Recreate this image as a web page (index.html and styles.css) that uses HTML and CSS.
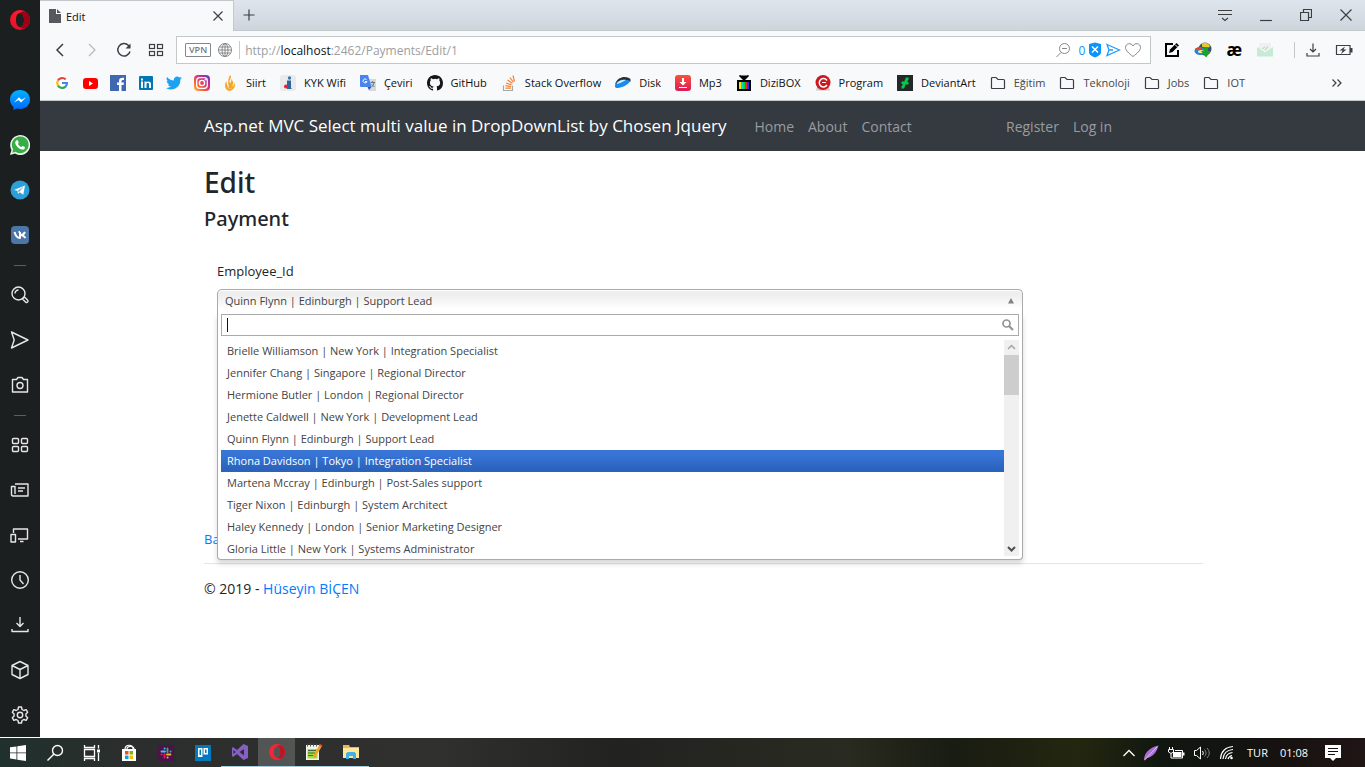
FILE: index.html
```html
<!DOCTYPE html>
<html lang="en">
<head>
<meta charset="utf-8">
<title>Edit</title>
<link rel="stylesheet" href="styles.css">
</head>
<body>
<div class="desktop">
  <div class="browser">
    <aside class="sidebar" aria-label="Browser sidebar">
      <button class="side-btn side-logo" aria-label="Opera menu"><svg width="20" height="20" viewBox="0 0 20 20"><defs><linearGradient id="opl" x1="0" y1="0" x2="0" y2="1"><stop offset="0" stop-color="#ff1b2d"/><stop offset="1" stop-color="#e6102a"/></linearGradient></defs><path fill="url(#opl)" fill-rule="evenodd" d="M10 0a10 10 0 1 0 0 20a10 10 0 0 0 0-20zM10 3c2.600 0 4 3 4 7s-1.400 7-4 7s-4-3-4-7s1.400-7 4-7z"/><path fill="#9c0014" d="M10 3c2-2 4.500-2 6.700-.400a10 10 0 0 1 0 14.800c-2.200 1.600-4.700 1.600-6.700-.400c2.600 0 4-3 4-7s-1.400-7-4-7z"/></svg></button>
      <button class="side-btn" aria-label="Messenger"><svg width="20" height="20" viewBox="0 0 20 20"><defs><linearGradient id="ms" x1="0" y1="0" x2="0" y2="1"><stop offset="0" stop-color="#00b2ff"/><stop offset="1" stop-color="#0068ff"/></linearGradient></defs><path fill="url(#ms)" d="M10 0c5.800 0 10 4.200 10 9.600S15.800 19 10 19c-1.200 0-2-.100-3-.400L3.500 20v-3C1.300 15.200 0 12.700 0 9.600C0 4.200 4.200 0 10 0z"/><path fill="#fff" d="M4 12.500l5-5.200 2.500 2.500 4.500-2.500-5 5.200-2.500-2.500z"/></svg></button>
      <button class="side-btn" aria-label="WhatsApp"><svg width="20" height="20" viewBox="0 0 20 20"><path fill="#f1f5f1" d="M0 20l1.500-5A10 10 0 1 1 5 18.600z"/><path fill="#35af45" d="M2.200 17.800l1-3.400a8.400 8.400 0 1 1 2.400 2.400z"/><path fill="#fff" d="M6.800 5.200c.5-.2 1 0 1.200.5l.7 1.700c.1.500-.8 1.200-.7 1.500.8 1.500 1.700 2.300 3.300 3 .4.100 1-1.100 1.500-1l1.900 1c.8.400-.1 2-1 2.500-2.500 1.200-8-3-8.500-6.500-.1-1 .6-2.400 1.600-2.700z"/></svg></button>
      <button class="side-btn" aria-label="Telegram"><svg width="20" height="20" viewBox="0 0 20 20"><circle cx="10" cy="10" r="9.500" fill="#2b9fd8"/><path fill="#fff" d="M4 10l11-4.500-1.700 9.200-3.600-2.400-1.700 1.800-.6-3.300z"/><path stroke="#a9c9dd" stroke-width="1" d="M7.800 11l5-3.500-4 4.300z"/></svg></button>
      <button class="side-btn" aria-label="VK"><svg width="20" height="20" viewBox="0 0 20 20"><rect x="1" y="1" width="18" height="18" rx="4" fill="#4b76a8"/><path fill="none" stroke="#fff" stroke-width="2" stroke-linejoin="round" d="M4.500 7c1 3.500 2.700 6 5.500 6V7M8.500 7H10M15 7c-1 2-2.500 3-4 3c1.500 0 3 1 4.500 3"/></svg></button>
      <hr class="side-rule">
      <button class="side-btn" aria-label="Search"><svg class="line" width="20" height="20" viewBox="0 0 20 20"><circle cx="8.500" cy="8.500" r="6.500"/><path d="M5 8.500A3.500 3.500 0 0 1 8.500 5M12.500 14l2-2 3 3c1.500 1.500-.5 3.500-2 2z"/></svg></button>
      <button class="side-btn" aria-label="My Flow"><svg class="line" width="20" height="20" viewBox="0 0 20 20"><path d="M1.500 2L18 10 1.500 18l2.700-8z"/></svg></button>
      <button class="side-btn" aria-label="Snapshot"><svg class="line" width="20" height="20" viewBox="0 0 20 20"><path d="M2.500 4.500h4l1.500-2h4l1.500 2h4v12.500h-15z"/><circle cx="10" cy="10.500" r="3"/></svg></button>
      <hr class="side-rule">
      <button class="side-btn" aria-label="Speed Dial"><svg class="line" width="20" height="20" viewBox="0 0 20 20"><rect x="2.500" y="3.500" width="6" height="5" rx="1"/><rect x="11.500" y="3.500" width="6" height="5" rx="1"/><rect x="2.500" y="11.500" width="6" height="5" rx="1"/><rect x="11.500" y="11.500" width="6" height="5" rx="1"/></svg></button>
      <button class="side-btn" aria-label="News"><svg class="line" width="20" height="20" viewBox="0 0 20 20"><path d="M5 4h13v12H3c-1 0-1.500-.5-1.500-1.500V6.500H5V14M8 8h7M8 11h5"/></svg></button>
      <button class="side-btn" aria-label="Devices"><svg class="line" width="20" height="20" viewBox="0 0 20 20"><path d="M3.500 8V4h14v10H8M10 16.500h3.500"/><rect x="1" y="9.500" width="4.500" height="7.500"/></svg></button>
      <button class="side-btn" aria-label="History"><svg class="line" width="20" height="20" viewBox="0 0 20 20"><circle cx="10" cy="10" r="8.300"/><path d="M10 5v5l3.500 4"/></svg></button>
      <button class="side-btn" aria-label="Downloads"><svg class="line" width="20" height="20" viewBox="0 0 20 20"><path d="M10 2v9M6.500 8l3.500 3.500L13.500 8M2 14v2.500h16V14"/></svg></button>
      <button class="side-btn" aria-label="Extensions"><svg class="line" width="20" height="20" viewBox="0 0 20 20"><path d="M10 1.500l8 4v9l-8 4-8-4v-9zM2 5.500l8 4 8-4M10 9.500v9"/></svg></button>
      <button class="side-btn" aria-label="Settings"><svg class="line" width="20" height="20" viewBox="0 0 20 20"><path d="M8.500 2h3l.5 2.500 1.800 1 2.400-.8 1.500 2.600L15.900 9v2l1.800 1.700-1.500 2.600-2.400-.8-1.800 1-.5 2.500h-3L8 15.500l-1.800-1-2.400.8-1.500-2.600L4.100 11V9L2.300 7.300l1.500-2.600 2.400.8 1.800-1z"/><circle cx="10" cy="10" r="2.700"/></svg></button>
    </aside>

    <div class="window">
      <header class="tabs">
        <div class="tab">
          <svg width="12" height="14" viewBox="0 0 12 14"><path fill="#55585c" d="M0 0h7v5h5v9H0zM8 0l4 4H8z"/></svg>
          <span class="tab-title">Edit</span>
          <button class="plain" aria-label="Close tab"><svg class="ink" width="12" height="12" viewBox="0 0 12 12"><path d="M1.500 1.500l9 9M10.500 1.500l-9 9"/></svg></button>
        </div>
        <button class="plain new-tab" aria-label="New tab"><svg class="ink" width="12" height="12" viewBox="0 0 12 12"><path d="M6 .500v11M.500 6h11"/></svg></button>
        <div class="window-buttons">
          <button class="plain" aria-label="Tab menu"><svg class="ink" width="14" height="14" viewBox="0 0 14 14"><path d="M0 2.500h14M0 6.500h14M4 10l3 2.500 3-2.500"/></svg></button>
          <button class="plain" aria-label="Minimize"><svg class="ink" width="12" height="14" viewBox="0 0 12 14"><path d="M0 12.500h12"/></svg></button>
          <button class="plain" aria-label="Restore"><svg class="ink" width="12" height="12" viewBox="0 0 12 12"><path d="M.500 3.500h8v8h-8zM3.500 3V.500h8v8H9"/></svg></button>
          <button class="plain" aria-label="Close"><svg class="ink" width="12" height="12" viewBox="0 0 12 12"><path d="M.500.500l11 11M11.500.500l-11 11"/></svg></button>
        </div>
      </header>

      <div class="toolbar">
        <div class="history">
          <button class="plain" aria-label="Back"><svg class="ink" width="16" height="16" viewBox="0 0 16 16"><path stroke-width="1.500" d="M11 2L5 8l6 6"/></svg></button>
          <button class="plain" aria-label="Forward"><svg class="faint" width="16" height="16" viewBox="0 0 16 16"><path d="M5 2l6 6-6 6"/></svg></button>
          <button class="plain" aria-label="Reload"><svg class="ink" width="16" height="16" viewBox="0 0 16 16"><path stroke-width="1.500" d="M14 9.500A6.200 6.200 0 1 1 12.500 3.500L14 5"/><path fill="#3c3f42" stroke="none" d="M14.500 1.500v5h-5z"/></svg></button>
          <button class="plain" aria-label="Speed Dial"><svg class="ink" width="16" height="16" viewBox="0 0 16 16"><rect x="1.500" y="2.500" width="5" height="4"/><rect x="9.500" y="2.500" width="5" height="4"/><rect x="1.500" y="9.500" width="5" height="4"/><rect x="9.500" y="9.500" width="5" height="4"/></svg></button>
        </div>
        <div class="address">
          <span class="vpn">VPN</span>
          <svg class="gray" width="16" height="16" viewBox="0 0 16 16"><circle cx="8" cy="8" r="6.500"/><ellipse cx="8" cy="8" rx="3" ry="6.500"/><path d="M2.500 5h11M2.500 11h11M1.500 8h13M8 1.500v13"/></svg>
          <span class="address-rule"></span>
          <span class="url">http://<span class="host">localhost</span>:2462/Payments/Edit/1</span>
          <div class="address-tools">
            <svg class="gray" width="16" height="16" viewBox="0 0 16 16"><circle cx="9.500" cy="6.500" r="5"/><path d="M6 10.500L1.500 15M7 6.500h5"/></svg>
            <span class="blocked">0</span>
            <svg width="14" height="16" viewBox="0 0 14 16"><path fill="#0a94ff" d="M1 2l6-1.500L13 2v8c0 3-3 4-6 5.500C4 14 1 13 1 10z"/><path stroke="#fff" stroke-width="1.500" d="M4 4.500l6 6M10 4.500l-6 6"/></svg>
            <svg width="16" height="16" viewBox="0 0 16 16"><path fill="none" stroke="#1f9bff" stroke-width="1.300" d="M2 2.500L14.500 8 2 13.500 4 8zM4 8h4"/></svg>
            <svg class="gray" width="18" height="16" viewBox="0 0 18 16"><path d="M9 14.500C5 11.500 1.500 8.500 1.500 5.500c0-4.500 6-5 7.500-1.500c1.500-3.500 7.500-3 7.500 1.500c0 3-3.500 6-7.500 9z"/></svg>
          </div>
        </div>
        <div class="extensions">
          <button class="plain" aria-label="Notes"><svg width="16" height="16" viewBox="0 0 16 16"><path fill="none" stroke="#000" stroke-width="2" d="M9 2H2v12h12V8"/><path fill="#000" d="M5 11l1-3.500L12.500 1 15 3.500 8.500 10z"/><path stroke="#f8f9fb" d="M11 2.500L13.500 5"/></svg></button>
          <button class="plain" aria-label="Download manager"><svg width="18" height="16" viewBox="0 0 18 16"><circle cx="11" cy="7" r="6.500" fill="#34566b"/><path fill="#e9c928" d="M8 1.500c4-2 7 0 8 3-2 2-6 1-8 0z"/><ellipse cx="6" cy="9" rx="5.500" ry="4" fill="#2184e0"/><path fill="#e8432c" d="M1 7c2-2 5-2 7-.500L6 8C4 7 3 7 1 7z"/><ellipse cx="7" cy="9.500" rx="3" ry="1.500" fill="#ffe96b"/><path fill="#18a42b" d="M10 5h4v4h3l-5 6.500L7 9h3z"/></svg></button>
          <button class="plain ae" aria-label="Extension ae">æ</button>
          <button class="plain" aria-label="Mail extension"><svg width="18" height="16" viewBox="0 0 18 16"><path fill="#eef2ee" d="M3 1h12v9H3z"/><path fill="#c6ead5" d="M1 5l8 5.500L17 5v9.500H1z"/><path stroke="#adc7ba" d="M6.500 7L9 4.500M9 8l3-3.500"/></svg></button>
        </div>
        <div class="toolbar-end">
          <button class="plain" aria-label="Downloads"><svg class="ink" width="16" height="16" viewBox="0 0 16 16"><path d="M8 1.500v8M5 7l3 3 3-3M2 11v3h12v-3"/></svg></button>
          <button class="plain" aria-label="Battery"><svg class="ink" width="18" height="16" viewBox="0 0 18 16"><path d="M1.500 3.500h13.500v9H1.500z"/><path fill="#3c3f42" stroke="none" d="M15 6h2.500v4.500H15zM10 4.500L4.500 8.500h3L6 12l5.500-4.500h-3z"/></svg></button>
        </div>
      </div>

      <nav class="bookmarks" aria-label="Bookmarks">
        <a href="#" aria-label="Google"><svg width="16" height="16" viewBox="0 0 16 16"><circle cx="8" cy="8" r="8" fill="#fff"/><g fill="none" stroke-width="2.200"><path stroke="#ea4335" d="M3.900 5.500A5 5 0 0 1 11.700 4.400"/><path stroke="#fbbc05" d="M3.900 10.500a5 5 0 0 1 0-5"/><path stroke="#34a853" d="M11.600 11.600A5 5 0 0 1 3.900 10.500"/><path stroke="#4285f4" d="M8 8h5a5 5 0 0 1-1.500 3.700"/></g></svg></a>
        <a href="#" aria-label="YouTube"><svg width="16" height="16" viewBox="0 0 16 16"><rect x="1" y="3" width="15" height="11" rx="3" fill="#f00"/><path fill="#fff" d="M7 6l4 2.500L7 11z"/></svg></a>
        <a href="#" aria-label="Facebook"><svg width="16" height="16" viewBox="0 0 16 16"><path fill="#4167b2" d="M0 0h16v16H0z"/><path fill="#fff" d="M9 16v-6H7V7.500h2V6c0-2.500 1.500-3.500 5-3.200V5c-2 0-2.500.200-2.500 1.300v1.200H14L13.500 10h-2v6z"/></svg></a>
        <a href="#" aria-label="LinkedIn"><svg width="16" height="16" viewBox="0 0 16 16"><rect x="1" y="1" width="14" height="14" rx="1" fill="#0077b5"/><path fill="#fff" d="M3 6.500h2V13H3zM3 3.500h2v2H3zM6.500 6.500h2v1c1-1.700 4.500-1.500 4.500 1.500v4h-2V9.500c0-2-2.500-1.800-2.500 0V13h-2z"/></svg></a>
        <a href="#" aria-label="Twitter"><svg width="16" height="16" viewBox="0 0 24 24"><path fill="#1da1f2" d="M24 4.600a10 10 0 0 1-2.800.8 5 5 0 0 0 2.100-2.700 10 10 0 0 1-3.100 1.200 4.900 4.900 0 0 0-8.400 4.500A14 14 0 0 1 1.700 3.100a4.900 4.900 0 0 0 1.500 6.600 5 5 0 0 1-2.200-.6 4.900 4.900 0 0 0 3.900 4.800 5 5 0 0 1-2.200.1 4.900 4.900 0 0 0 4.600 3.400A10 10 0 0 1 0 19.500 14 14 0 0 0 21.500 7a10 10 0 0 0 2.500-2.400z"/></svg></a>
        <a href="#" aria-label="Instagram"><svg width="16" height="16" viewBox="0 0 16 16"><defs><linearGradient id="ig" x1="0" y1="1" x2="1" y2="0"><stop offset="0" stop-color="#fdc04b"/><stop offset=".35" stop-color="#f35a3c"/><stop offset=".6" stop-color="#d52f87"/><stop offset="1" stop-color="#6038d0"/></linearGradient></defs><rect width="16" height="16" rx="4" fill="url(#ig)"/><rect x="2.700" y="2.700" width="10.600" height="10.600" rx="3" fill="none" stroke="#fff" stroke-width="1.300"/><circle cx="8" cy="8" r="2.600" fill="none" stroke="#fff" stroke-width="1.400"/><circle cx="11.300" cy="4.700" r=".8" fill="#fff"/></svg></a>
        <a href="#" class="named"><svg width="16" height="16" viewBox="0 0 16 16"><path fill="#f4a629" d="M8 0c3 3-2 5 0 8 2-1 1-3 1-4 3 3 3 6 0 8 3-1 4-3 3.500-5 2 4-1 8-4.500 9-3 0-5-3-5-5 0-3 1-4 1.500-5 0 3 .5 5 2.500 6-1.500-4-1-8 1-12z"/><path fill="#f8f9fb" d="M5 10c1 3 3 4 5 3-1 1.500-4.500 1-5-3z"/></svg>Siirt</a>
        <a href="#" class="named"><svg width="16" height="16" viewBox="0 0 16 16"><rect width="16" height="16" rx="3" fill="#e9eaec"/><path fill="#2d659b" d="M7 5.500h4V13l1 1H7z"/><circle cx="9.500" cy="3" r="1.700" fill="#3b78aa"/><circle cx="6" cy="11.500" r="2" fill="#f31b2d"/></svg>KYK Wifi</a>
        <a href="#" class="named"><svg width="16" height="16" viewBox="0 0 16 16"><path fill="#d6d8db" d="M6 4h10v12H9z"/><path fill="#4784f0" d="M0 0h8l3.500 12H1a1 1 0 0 1-1-1z"/><path fill="#3058b0" d="M7.500 12h4L9 15z"/><path fill="none" stroke="#fff" d="M6.500 4.500A2 2 0 1 0 7 6.500H5"/><path fill="none" stroke="#667983" d="M10.500 7.500H15M12.700 6v1.500M14 8c-.5 2-1.500 3-2.500 4M11.500 9l3 3"/></svg>Çeviri</a>
        <a href="#" class="named"><svg width="16" height="16" viewBox="0 0 16 16"><path fill="#171515" d="M8 0C3.580 0 0 3.580 0 8c0 3.540 2.290 6.530 5.470 7.590.4.070.550-.170.550-.380v-1.490c-2.010.370-2.530-.490-2.690-.940-.090-.230-.480-.940-.820-1.130-.280-.150-.680-.520-.010-.530.630-.010 1.080.580 1.230.820.720 1.210 1.870.870 2.330.660.070-.520.280-.870.510-1.070-1.780-.200-3.640-.890-3.640-3.950 0-.870.310-1.590.820-2.150-.080-.200-.360-1.020.080-2.120 0 0 .670-.210 2.200.820a7.400 7.400 0 0 1 4 0c1.530-1.040 2.200-.820 2.200-.820.440 1.100.160 1.920.080 2.120.510.560.820 1.270.820 2.150 0 3.070-1.870 3.750-3.650 3.950.290.250.540.730.540 1.480v2.200c0 .210.150.460.550.380A8 8 0 0 0 16 8c0-4.420-3.580-8-8-8z"/></svg>GitHub</a>
        <a href="#" class="named"><svg width="16" height="16" viewBox="0 0 16 16"><path fill="none" stroke="#a6a8aa" stroke-width="1.200" d="M2.500 10.500v5h9v-5"/><path fill="none" stroke="#f08436" stroke-width="1.200" d="M4.500 13.200h5.500M4.500 10.700l5.600.8M5 8l5.500 1.900M6.500 5l5 3.400M8.800 2.500l3.700 4.700M12 .5l1.500 5.800"/></svg>Stack Overflow</a>
        <a href="#" class="named"><svg width="16" height="16" viewBox="0 0 16 16"><path fill="#2a3036" d="M0 9C3 2 9 1 14 3c2 1 2 2 1 4L9 5z"/><path fill="#188af0" d="M0 10c1-3 5-6 10-5 3 0 5 .500 5 1-1 3-6 6-12 7-2.500.300-3.500-1-3-3z"/><path fill="#d6edff" d="M2 8c3-3 6-3.500 9-3-3 1-4 3-9 4z"/></svg>Disk</a>
        <a href="#" class="named"><svg width="16" height="16" viewBox="0 0 16 16"><defs><linearGradient id="mp" x1="0" y1="0" x2="0" y2="1"><stop offset="0" stop-color="#fb513b"/><stop offset="1" stop-color="#d81d57"/></linearGradient></defs><rect width="16" height="16" rx="3" fill="url(#mp)"/><path fill="#fff" d="M7 3h2v4h2.500L8 10.500 4.500 7H7zM4 12h8v1H4z"/></svg>Mp3</a>
        <a href="#" class="named"><svg width="16" height="16" viewBox="0 0 16 16"><path d="M1 5h14v11H1z"/><path stroke="#000" stroke-width="1.500" d="M3.500 .5L8 5l4.500-4.500"/><path fill="#ffe500" d="M3 7h2v7H3z"/><path fill="#00dada" d="M5 7h2v7H5z"/><path fill="#00d830" d="M7 7h2v7H7z"/><path fill="#f12b2b" d="M9 7h2v7H9z"/><path fill="#2138ec" d="M11 7h2v7h-2z"/></svg>DiziBOX</a>
        <a href="#" class="named"><svg width="16" height="16" viewBox="0 0 16 16"><path fill="#ccc" d="M2 12h12l1 3.500H1z"/><circle cx="8" cy="7.500" r="7.500" fill="#cf171e"/><path fill="none" stroke="#fff" stroke-width="1.500" d="M12 5.500A4.200 4.200 0 1 0 12 10"/><path stroke="#fff" d="M7 7.500h4"/></svg>Program</a>
        <a href="#" class="named"><svg width="16" height="16" viewBox="0 0 16 16"><path fill="#242829" d="M0 0h16v16H0z"/><path fill="#05cc47" d="M9 2.500h2.500v2L10 7h1.500v2.500H8.700L7 13.500H4.500v-2L6 9H4.500V6.500h2.800z"/></svg>DeviantArt</a>
        <a href="#" class="named folder"><svg class="ink" width="16" height="16" viewBox="0 0 16 16"><path d="M1.500 12V3.500a1 1 0 0 1 1-1H6l2 2h5.500a1 1 0 0 1 1 1V12a1 1 0 0 1-1 1.500h-11a1 1 0 0 1-1-1.500z"/></svg>Eğitim</a>
        <a href="#" class="named folder"><svg class="ink" width="16" height="16" viewBox="0 0 16 16"><path d="M1.500 12V3.500a1 1 0 0 1 1-1H6l2 2h5.500a1 1 0 0 1 1 1V12a1 1 0 0 1-1 1.500h-11a1 1 0 0 1-1-1.500z"/></svg>Teknoloji</a>
        <a href="#" class="named folder"><svg class="ink" width="16" height="16" viewBox="0 0 16 16"><path d="M1.500 12V3.500a1 1 0 0 1 1-1H6l2 2h5.500a1 1 0 0 1 1 1V12a1 1 0 0 1-1 1.500h-11a1 1 0 0 1-1-1.500z"/></svg>Jobs</a>
        <a href="#" class="named folder"><svg class="ink" width="16" height="16" viewBox="0 0 16 16"><path d="M1.500 12V3.500a1 1 0 0 1 1-1H6l2 2h5.500a1 1 0 0 1 1 1V12a1 1 0 0 1-1 1.500h-11a1 1 0 0 1-1-1.500z"/></svg>IOT</a>
        <button class="plain more" aria-label="More bookmarks"><svg class="ink" width="12" height="10" viewBox="0 0 12 10"><path d="M1.500 1.500L5 5 1.500 8.500M6.500 1.500L10 5 6.500 8.500"/></svg></button>
      </nav>

      <div class="page">
        <nav class="navbar">
          <div class="container navbar-inner">
            <a class="brand" href="#">Asp.net MVC Select multi value in DropDownList by Chosen Jquery</a>
            <div class="nav-links"><a href="#">Home</a><a href="#">About</a><a href="#">Contact</a></div>
            <div class="nav-links account"><a href="#">Register</a><a href="#">Log in</a></div>
          </div>
        </nav>
        <main class="container content">
          <h1>Edit</h1>
          <h2>Payment</h2>
          <form class="form" onsubmit="return false">
            <label for="employee-search">Employee_Id</label>
            <div class="chosen">
              <button type="button" class="chosen-single" aria-expanded="true"><span>Quinn Flynn | Edinburgh | Support Lead</span><svg width="8" height="6" viewBox="0 0 8 6"><path fill="#828282" d="M4 0l3 5.500H1z"/></svg></button>
              <div class="chosen-drop">
                <div class="chosen-search">
                  <input id="employee-search" type="text" autocomplete="off">
                  <span class="caret"></span>
                  <svg width="12" height="12" viewBox="0 0 12 12"><circle cx="4.500" cy="4.500" r="3.500" fill="none" stroke="#939393" stroke-width="1.700"/><path stroke="#939393" stroke-width="2.200" d="M7 7l4 4"/></svg>
                </div>
                <div class="chosen-body">
                  <ul class="chosen-results" role="listbox" aria-label="Employee_Id">
                    <li role="option">Brielle Williamson | New York | Integration Specialist</li>
                    <li role="option">Jennifer Chang | Singapore | Regional Director</li>
                    <li role="option">Hermione Butler | London | Regional Director</li>
                    <li role="option">Jenette Caldwell | New York | Development Lead</li>
                    <li role="option">Quinn Flynn | Edinburgh | Support Lead</li>
                    <li role="option" class="highlighted" aria-selected="true">Rhona Davidson | Tokyo | Integration Specialist</li>
                    <li role="option">Martena Mccray | Edinburgh | Post-Sales support</li>
                    <li role="option">Tiger Nixon | Edinburgh | System Architect</li>
                    <li role="option">Haley Kennedy | London | Senior Marketing Designer</li>
                    <li role="option">Gloria Little | New York | Systems Administrator</li>
                  </ul>
                  <div class="scroll" aria-hidden="true">
                    <svg width="15" height="15" viewBox="0 0 15 15"><path fill="none" stroke="#a3a3a3" stroke-width="1.500" d="M4 9l3.500-3.500L11 9"/></svg>
                    <span class="thumb"></span>
                    <svg width="15" height="15" viewBox="0 0 15 15"><path fill="none" stroke="#505050" stroke-width="2" d="M4 6l3.500 3.500L11 6"/></svg>
                  </div>
                </div>
              </div>
            </div>
          </form>
          <a class="back" href="#">Back to List</a>
          <footer class="footer">© 2019 - <a href="#">Hüseyin BİÇEN</a></footer>
        </main>
      </div>
    </div>
  </div>

  <div class="taskbar">
    <button class="task start" aria-label="Start"><svg width="16" height="16" viewBox="0 0 16 16"><path fill="#fff" d="M0 2.300L6.500 1.400v6.100H0zM7.300 1.300L16 0v7.500H7.300zM0 8.300h6.500v6.200L0 13.600zM7.300 8.300H16V16l-8.700-1.300z"/></svg></button>
    <button class="task" aria-label="Search"><svg width="18" height="18" viewBox="0 0 18 18"><g fill="none" stroke="#fff" stroke-width="1.400"><circle cx="11.500" cy="6.500" r="5"/><path d="M8 10l-6.500 6.500"/></g></svg></button>
    <button class="task" aria-label="Task View"><svg width="18" height="16" viewBox="0 0 18 16"><path fill="none" stroke="#fff" stroke-width="1.300" d="M1.500 0v2.500h10V0M1.500 4.500h10v7h-10zM1.500 16v-2.500h10V16M15.500 0v3.500M15.500 8v8"/><path fill="#fff" d="M14 4.500h3v3h-3z"/></svg></button>
    <button class="task" aria-label="Store"><svg width="16" height="18" viewBox="0 0 16 18"><path fill="none" stroke="#fff" stroke-width="1.200" d="M4 5C4 0 12 0 12 5M6 5c0-4 7-3 7 0"/><path fill="#fff" d="M1 5h14v12H1z"/><path fill="#f25022" d="M4 7h3.500v3.500H4z"/><path fill="#7fba00" d="M8.500 7H12v3.500H8.500z"/><path fill="#00a4ef" d="M4 11.500h3.500V15H4z"/><path fill="#ffb900" d="M8.500 11.500H12V15H8.500z"/></svg></button>
    <button class="task" aria-label="Slack"><svg width="16" height="16" viewBox="0 0 16 16"><rect width="16" height="16" rx="2" fill="#4b124c"/><g stroke-width="1.800" stroke-linecap="round"><path stroke="#36c5f0" d="M3.500 6.500H7M6.500 3.500h.2"/><path stroke="#2eb67d" d="M9.500 3.500V7M12.500 6.500h.2"/><path stroke="#ecb22e" d="M9 9.500h3.500M9.500 12.500h.2"/><path stroke="#e01e5a" d="M6.500 9v3.500M3.500 9.500h.2"/></g></svg></button>
    <button class="task" aria-label="Trello"><svg width="16" height="16" viewBox="0 0 16 16"><path fill="#0079bf" d="M0 0h16v16H0z"/><path fill="#fff" d="M3 3h4.500v9H3zM8.500 3H13v6.500H8.500z"/><path fill="#0079bf" d="M4.500 4.500H6V10H4.500zM10 4.500h1.500V8H10z"/></svg></button>
    <button class="task open" aria-label="Visual Studio"><svg width="18" height="18" viewBox="0 0 18 18"><path fill="#865fc5" fill-rule="evenodd" d="M12.500 1L17 3v12l-4.500 2L6 11l-4 3-1-1V5l1-1 4 3zM13 6L8.500 9l4.500 3.500zM2.500 7v4L4.800 9z"/></svg></button>
    <button class="task open active" aria-label="Opera"><svg width="16" height="16" viewBox="0 0 20 20"><path fill="#f32637" fill-rule="evenodd" d="M10 0a10 10 0 1 0 0 20a10 10 0 0 0 0-20zM10 3c2.600 0 4 3 4 7s-1.400 7-4 7s-4-3-4-7s1.400-7 4-7z"/><path fill="#b71826" d="M10 3c2-2 4.500-2 6.700-.400a10 10 0 0 1 0 14.800c-2.200 1.600-4.700 1.600-6.700-.400c2.600 0 4-3 4-7s-1.400-7-4-7z"/></svg></button>
    <button class="task open" aria-label="Notepad++"><svg width="18" height="18" viewBox="0 0 18 18"><path fill="#f2f3ef" d="M1 2h13v15H1z"/><path fill="#a2db42" d="M2.500 6h10v9.500h-10z"/><path stroke="#486b35" d="M3 7.500h8M3 10h7M3 12.500h5"/><path stroke="#555" d="M2.500.500v3M5.500.500v3M8.500.500v3M11.500.500v3"/><path fill="#f6a51a" d="M14.500 1.500L17 3 10.500 14 8 15.500 8.500 12.500z"/><path fill="#e04e3c" d="M15 1l2.500 1.500L16.500 4 14 2.500z"/></svg></button>
    <button class="task open" aria-label="File Explorer"><svg width="18" height="16" viewBox="0 0 18 16"><path fill="#e9b84c" d="M1 1h6l1 2h9v11H1z"/><path fill="#ffe79c" d="M1 4h16v10H1z"/><path fill="#3fb2ea" d="M4 15V9.500L5.500 8h7L14 9.500V15h-3v-3H7v3z"/></svg></button>
    <div class="tray">
      <button class="plain" aria-label="Hidden icons"><svg class="white" width="12" height="8" viewBox="0 0 12 8"><path d="M.500 7L6 1.500 11.500 7"/></svg></button>
      <svg width="16" height="16" viewBox="0 0 16 16"><path fill="#a971d1" d="M1 15C1 8 7 2 15.500.500 14 7 10 12 4 13l-2 2.500z"/><path stroke="#dfc3f0" d="M2 14.500L14 2"/></svg>
      <svg width="18" height="16" viewBox="0 0 18 16"><path fill="none" stroke="#fff" d="M2.500 2v2M5.500 2v2M1.500 4.500h5V7L4 8.500 1.500 7zM4 8.500v4.500h11.500V5.500H8"/><path fill="#fff" d="M6 7h8.500v5H6zM16 7.500h1.500v3H16z"/></svg>
      <svg width="18" height="16" viewBox="0 0 18 16"><path fill="none" stroke="#fff" d="M1.500 5.500h2L7.500 2v12L3.500 10.500h-2zM9.500 6c1 1.500 1 2.500 0 4"/><path fill="none" stroke="#858784" d="M11.500 4.500c2 2.500 2 4.500 0 7M14 3c3 3.500 3 6.500 0 10"/></svg>
      <svg width="16" height="16" viewBox="0 0 16 16"><path fill="none" stroke="#fff" stroke-width="1.200" d="M9 14c.5-2 2-3 4-3.500M6.500 14c.5-4 3-6 7-6.500M4 14C4.500 8 8 5 14 4.500M1.500 14C2 6 7 2 14 1.500"/><circle cx="12.500" cy="13" r="1.300" fill="#fff"/></svg>
      <span class="tray-text">TUR</span>
      <span class="tray-text">01:08</span>
      <button class="plain notice" aria-label="Notifications"><svg width="16" height="16" viewBox="0 0 16 16"><path fill="#fff" d="M0 0h16v13h-5l-3 3-3-3H0z"/><path stroke="#111" d="M3 3.500h10M3 6.500h10M3 9.500h7"/></svg></button>
    </div>
  </div>
</div>
</body>
</html>
```
FILE: styles.css
```css
* { box-sizing: border-box; }

body {
  margin: 0;
  font-family: "Open Sans", "Noto Sans", sans-serif;
  font-size: 14px;
  color: #212529;
  background: #fff;
}

a { color: #007bff; text-decoration: none; }
svg { display: block; flex: none; }
button { font-family: inherit; cursor: pointer; }

.plain {
  display: flex;
  padding: 0;
  border: 0;
  background: none;
}

.ink { fill: none; stroke: #3c3f42; stroke-width: 1.2; }
.faint { fill: none; stroke: #b5b8bb; stroke-width: 1.2; }
.gray { fill: none; stroke: #85888b; stroke-width: 1; }
.line { fill: none; stroke: #e6e8e8; stroke-width: 1.4; stroke-linejoin: round; }
.white { fill: none; stroke: #fff; stroke-width: 1.3; }

.desktop { display: flex; flex-direction: column; min-height: 100vh; }
.browser { display: flex; flex: 1; }

/* Sidebar */
.sidebar {
  display: flex;
  flex-direction: column;
  align-items: center;
  width: 40px;
  background: #1b1f1f;
  border-bottom: 1px solid #fff;
}
.side-btn {
  display: flex;
  align-items: center;
  justify-content: center;
  width: 40px;
  height: 45px;
  padding: 0;
  border: 0;
  background: none;
}
.side-logo { height: 40px; margin-bottom: 37px; }
.side-rule {
  width: 12px;
  height: 1px;
  margin: 8px 0 6px;
  border: 0;
  background: #5b5f60;
}

/* Tabs */
.window { display: flex; flex: 1; flex-direction: column; min-width: 0; }
.tabs {
  display: flex;
  height: 31px;
  background: linear-gradient(#dfe5ed, #cfd5dd);
  border-bottom: 1px solid #c3c9ca;
}
.tab {
  display: flex;
  align-items: center;
  gap: 5px;
  width: 194px;
  height: 31px;
  padding: 0 9px;
  font-size: 11px;
  color: #111;
  background: #f8f9fb;
  border-top: 1px solid #c3c9ca;
  border-right: 1px solid #c3c9ca;
}
.tab-title { flex: 1; }
.new-tab { align-items: center; margin-left: 9px; }
.window-buttons {
  display: flex;
  align-items: center;
  gap: 28px;
  margin-left: auto;
  padding-right: 13px;
}

/* Toolbar */
.toolbar {
  display: flex;
  align-items: center;
  height: 38px;
  padding: 0 12px;
  background: #f8f9fb;
}
.history { display: flex; gap: 16px; margin-right: 12px; }
.address {
  display: flex;
  flex: 1;
  align-items: center;
  height: 28px;
  padding: 0 8px;
  background: #fff;
  border: 1px solid #c3c9ca;
}
.vpn {
  height: 14px;
  margin-right: 6px;
  padding: 0 3px;
  font-size: 9px;
  font-weight: 600;
  line-height: 12px;
  color: #777a7d;
  border: 1px solid #85888b;
  border-radius: 1px;
}
.address-rule { width: 1px; height: 18px; margin: 0 5px 0 6px; background: #c9cccd; }
.url { flex: 1; font-size: 12px; color: #9b9ea0; }
.host { color: #111; }
.address-tools { display: flex; align-items: center; gap: 3px; }
.blocked { margin-left: 5px; font-size: 12px; color: #0a94ff; }
.extensions { display: flex; align-items: center; gap: 14px; margin-left: 13px; }
.ae { font-size: 17px; font-weight: 700; line-height: 16px; color: #000; }
.toolbar-end {
  display: flex;
  gap: 14px;
  margin-left: 20px;
  padding-left: 10px;
  border-left: 1px solid #c3c9ca;
}

/* Bookmarks */
.bookmarks {
  display: flex;
  align-items: center;
  gap: 12px;
  height: 32px;
  padding: 0 22px 4px 14px;
  background: #f8f9fb;
  border-bottom: 1px solid #c3cbc9;
}
.bookmarks a {
  display: flex;
  align-items: center;
  gap: 8px;
  font-size: 11px;
  color: #111;
  white-space: nowrap;
}
.bookmarks .named { padding-right: 2px; }
.bookmarks .folder { color: #44484b; }
.more { margin-left: auto; }

/* Site navigation */
.page { flex: 1; background: #fff; }
.container { width: 100%; max-width: 1001px; margin: 0 auto; padding-left: 2px; }
.navbar { background: #343a40; }
.navbar-inner { display: flex; align-items: center; min-height: 50px; }
.brand { margin-right: 28px; font-size: 17px; line-height: 26px; color: #fff; }
.nav-links { display: flex; gap: 14px; }
.nav-links a { line-height: 21px; color: #999c9f; }
.account { margin-left: auto; padding-right: 91px; }

/* Form */
.content h1,
.content h2 { font-family: "Noto Sans", "Open Sans", sans-serif; font-weight: 500; }
.content h1 { margin: 14px 0 7px; font-size: 28px; line-height: 34px; }
.content h2 { margin: 0; font-size: 20px; line-height: 25px; }
.form { padding: 30px 180px 0 13px; }
.form label { display: block; margin-bottom: 7px; font-size: 13px; line-height: 21px; }
.chosen { position: relative; height: 240px; font-size: 11px; }
.chosen-single {
  display: flex;
  align-items: center;
  justify-content: space-between;
  width: 100%;
  height: 25px;
  padding: 0 7px 3px;
  font-size: 11px;
  color: #444;
  background: linear-gradient(#eee 20%, #fff 80%);
  border: 1px solid #aaa;
  border-bottom: 0;
  border-radius: 5px 5px 0 0;
  box-shadow: inset 0 1px 0 #fff;
}
.chosen-drop {
  position: absolute;
  top: 24px;
  left: 0;
  right: 0;
  padding-bottom: 3px;
  background: #fff;
  border: 1px solid #aaa;
  border-top: 0;
  border-radius: 0 0 4px 4px;
  box-shadow: 0 4px 5px rgba(0, 0, 0, .15);
}
.chosen-search { position: relative; padding: 1px 3px 4px; }
.chosen-search input {
  display: block;
  width: 100%;
  height: 22px;
  padding: 4px 20px 4px 5px;
  font: 11px "Open Sans", "Noto Sans", sans-serif;
  color: #212529;
  background: #fff;
  border: 1px solid #aaa;
  outline: 0;
}
.chosen-search svg { position: absolute; top: 6px; right: 8px; }
.caret { position: absolute; top: 5px; left: 9px; width: 1px; height: 14px; background: #111; }
.chosen-body { display: flex; max-height: 216px; padding: 0 3px; overflow: hidden; }
.chosen-results { flex: 1; margin: 0; padding: 0; overflow: hidden; list-style: none; }
.chosen-results li { padding: 0 6px; line-height: 22px; color: #444; }
.chosen-results .highlighted { color: #fff; background: linear-gradient(#3875d7 20%, #2a62bc 90%); }
.scroll { display: flex; flex-direction: column; width: 15px; background: #f0f0f0; }
.thumb { height: 40px; margin-bottom: auto; background: #cdcdcd; }

.back { display: block; font-size: 13px; line-height: 21px; }
.footer {
  margin-top: 13px;
  padding-top: 14px;
  line-height: 22px;
  border-top: 1px solid #e5e5e5;
}

/* Taskbar */
.taskbar {
  display: flex;
  height: 29px;
  color: #fff;
  background: linear-gradient(90deg, #20302c, #2b2e2c 10%, #30302f 32%, #222320 45%, #292a20 62%, #191c12 70%, #24270f 79%, #10170f 85%, #151210 93%, #1f1514);
}
.task {
  display: flex;
  align-items: center;
  justify-content: center;
  width: 37px;
  padding: 0;
  border: 0;
  background: none;
}
.start { width: 36px; }
.open {
  border-bottom: 1px solid #9fd0e0;
  background-clip: padding-box;
}
.active { background: #535454; }
.tray {
  display: flex;
  align-items: center;
  gap: 8px;
  margin-left: auto;
  padding-right: 24px;
}
.tray-text { margin-left: 4px; font-size: 11px; }
.notice { margin-left: 9px; }
```
